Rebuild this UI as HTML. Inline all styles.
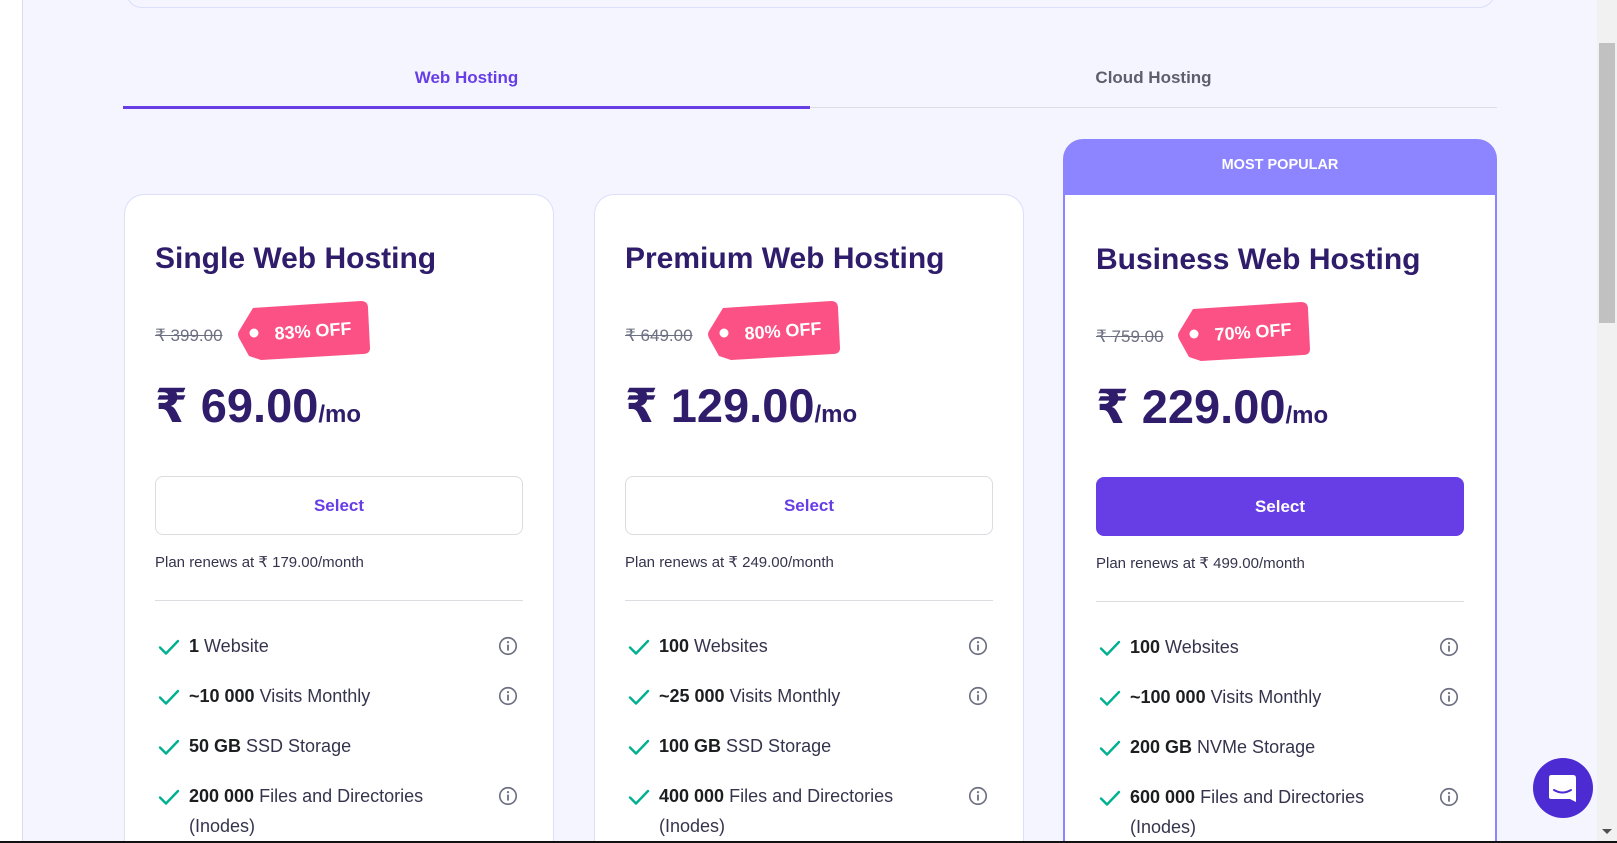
<!DOCTYPE html>
<html><head><meta charset="utf-8"><style>
*{margin:0;padding:0;box-sizing:border-box}
html,body{width:1617px;height:843px;overflow:hidden}
body{background:#f4f5ff;font-family:"Liberation Sans","DejaVu Sans",sans-serif;position:relative;color:#2f1c6a}
.abs{position:absolute}
.leftwhite{left:0;top:0;width:23px;height:843px;background:#fff;border-right:1px solid #dadce6}
.topbox{left:126px;top:-30px;width:1369px;height:38px;border:1px solid #dadffa;border-radius:16px;background:#f4f5ff}
.tab{top:68px;font-size:17px;font-weight:bold;text-align:center;width:687px}
.card{top:194px;width:430px;height:649px;background:#fff;border:1px solid #dadffa;border-bottom:none;border-radius:20px 20px 0 0}
.card3{left:1063px;top:195px;width:434px;height:648px;background:#fff;border:2px solid #8c85ff;border-top:none;border-bottom:none}
.hdr{left:1063px;top:139px;width:434px;height:57px;background:#8c85ff;border-radius:20px 20px 0 0;color:#fff;font-size:14.5px;font-weight:bold;text-align:center;line-height:52px}
.title{font-size:30px;font-weight:bold;color:#2f1c6a;white-space:nowrap}
.old{font-size:17px;color:#6d7081;text-decoration:line-through}
.price{font-size:47px;font-weight:bold;white-space:nowrap}
.price small{font-size:24px;font-weight:bold}
.btn{width:368px;height:59px;border:1px solid #dadce0;border-radius:8px;font-size:17px;font-weight:bold;color:#673de6;text-align:center;line-height:57px;background:#fff}
.btn.p{background:#673de6;color:#fff;border-color:#673de6}
.renew{font-size:15px;color:#36344d}
.div{width:368px;height:1px;background:#dadce0}
.feat{font-size:18px;color:#36344d;white-space:nowrap}
.feat b{color:#1d1e20}
.chk{position:absolute;left:-32px;top:-1px}
.info{position:absolute}
</style></head><body>
<div class="abs leftwhite"></div>
<div class="abs topbox"></div>
<div class="abs tab" style="left:123px;color:#673de6">Web Hosting</div>
<div class="abs tab" style="left:810px;color:#5e5e6c">Cloud Hosting</div>
<div class="abs" style="left:123px;top:107px;width:1374px;height:1px;background:#dadce6"></div>
<div class="abs" style="left:123px;top:106px;width:687px;height:3px;background:#673de6"></div>

<div class="abs card" style="left:124px"></div>
<div class="abs card" style="left:594px"></div>
<div class="abs hdr">MOST POPULAR</div>
<div class="abs card3"></div>

<div class="abs title" style="left:155px;top:242px">Single Web Hosting</div>
<div class="abs old" style="left:155px;top:326px">₹ 399.00</div>
<svg class="abs" style="left:237px;top:298px" viewBox="0 0 134 62" width="134" height="62"><path d="M12 58 L2 40 Q0 36 2 33 L16 10 L124 3 Q131 3 131 10 L133 50 Q133 56 126 56 L24 62 Z" fill="#fc5185"/><circle cx="17" cy="35" r="4.5" fill="#fff"/><text x="76" y="39" font-size="18" font-weight="bold" fill="#fff" text-anchor="middle" transform="rotate(-4 76 33)" font-family="Liberation Sans,sans-serif">83% OFF</text></svg>
<div class="abs price" style="left:155px;top:378px">₹ 69.00<small>/mo</small></div>
<div class="abs btn" style="left:155px;top:476px">Select</div>
<div class="abs renew" style="left:155px;top:553px">Plan renews at ₹ 179.00/month</div>
<div class="abs div" style="left:155px;top:600px"></div>

<div class="abs title" style="left:625px;top:242px">Premium Web Hosting</div>
<div class="abs old" style="left:625px;top:326px">₹ 649.00</div>
<svg class="abs" style="left:707px;top:298px" viewBox="0 0 134 62" width="134" height="62"><path d="M12 58 L2 40 Q0 36 2 33 L16 10 L124 3 Q131 3 131 10 L133 50 Q133 56 126 56 L24 62 Z" fill="#fc5185"/><circle cx="17" cy="35" r="4.5" fill="#fff"/><text x="76" y="39" font-size="18" font-weight="bold" fill="#fff" text-anchor="middle" transform="rotate(-4 76 33)" font-family="Liberation Sans,sans-serif">80% OFF</text></svg>
<div class="abs price" style="left:625px;top:378px">₹ 129.00<small>/mo</small></div>
<div class="abs btn" style="left:625px;top:476px">Select</div>
<div class="abs renew" style="left:625px;top:553px">Plan renews at ₹ 249.00/month</div>
<div class="abs div" style="left:625px;top:600px"></div>

<div class="abs title" style="left:1096px;top:243px">Business Web Hosting</div>
<div class="abs old" style="left:1096px;top:327px">₹ 759.00</div>
<svg class="abs" style="left:1177px;top:299px" viewBox="0 0 134 62" width="134" height="62"><path d="M12 58 L2 40 Q0 36 2 33 L16 10 L124 3 Q131 3 131 10 L133 50 Q133 56 126 56 L24 62 Z" fill="#fc5185"/><circle cx="17" cy="35" r="4.5" fill="#fff"/><text x="76" y="39" font-size="18" font-weight="bold" fill="#fff" text-anchor="middle" transform="rotate(-4 76 33)" font-family="Liberation Sans,sans-serif">70% OFF</text></svg>
<div class="abs price" style="left:1096px;top:379px">₹ 229.00<small>/mo</small></div>
<div class="abs btn p" style="left:1096px;top:477px">Select</div>
<div class="abs renew" style="left:1096px;top:554px">Plan renews at ₹ 499.00/month</div>
<div class="abs div" style="left:1096px;top:601px"></div>

<svg width="0" height="0" style="position:absolute"><defs>
<symbol id="ck" viewBox="0 0 24 24"><path d="M3 12.5 L9 18.5 L21 6" fill="none" stroke="#00b090" stroke-width="2.4" stroke-linecap="round" stroke-linejoin="round"/></symbol>
<symbol id="in" viewBox="0 0 24 24"><circle cx="12" cy="12" r="9" fill="none" stroke="#6d7081" stroke-width="1.8"/><circle cx="12" cy="7.8" r="1.2" fill="#6d7081"/><path d="M12 10.5v6.5" stroke="#6d7081" stroke-width="2"/></symbol>
</defs></svg>

<div class="abs" style="left:189px;top:636px">
 <div class="feat abs" style="top:0"><svg class="chk" width="24" height="24"><use href="#ck"/></svg><b>1</b> Website</div>
 <div class="feat abs" style="top:50px"><svg class="chk" width="24" height="24"><use href="#ck"/></svg><b>~10 000</b> Visits Monthly</div>
 <div class="feat abs" style="top:100px"><svg class="chk" width="24" height="24"><use href="#ck"/></svg><b>50 GB</b> SSD Storage</div>
 <div class="feat abs" style="top:150px"><svg class="chk" width="24" height="24"><use href="#ck"/></svg><b>200 000</b> Files and Directories<br><span style="line-height:38px">(Inodes)</span></div>
 <svg class="info" style="left:308px;top:-1px" width="22" height="22"><use href="#in"/></svg>
 <svg class="info" style="left:308px;top:49px" width="22" height="22"><use href="#in"/></svg>
 <svg class="info" style="left:308px;top:149px" width="22" height="22"><use href="#in"/></svg>
</div>
<div class="abs" style="left:659px;top:636px">
 <div class="feat abs" style="top:0"><svg class="chk" width="24" height="24"><use href="#ck"/></svg><b>100</b> Websites</div>
 <div class="feat abs" style="top:50px"><svg class="chk" width="24" height="24"><use href="#ck"/></svg><b>~25 000</b> Visits Monthly</div>
 <div class="feat abs" style="top:100px"><svg class="chk" width="24" height="24"><use href="#ck"/></svg><b>100 GB</b> SSD Storage</div>
 <div class="feat abs" style="top:150px"><svg class="chk" width="24" height="24"><use href="#ck"/></svg><b>400 000</b> Files and Directories<br><span style="line-height:38px">(Inodes)</span></div>
 <svg class="info" style="left:308px;top:-1px" width="22" height="22"><use href="#in"/></svg>
 <svg class="info" style="left:308px;top:49px" width="22" height="22"><use href="#in"/></svg>
 <svg class="info" style="left:308px;top:149px" width="22" height="22"><use href="#in"/></svg>
</div>
<div class="abs" style="left:1130px;top:637px">
 <div class="feat abs" style="top:0"><svg class="chk" width="24" height="24"><use href="#ck"/></svg><b>100</b> Websites</div>
 <div class="feat abs" style="top:50px"><svg class="chk" width="24" height="24"><use href="#ck"/></svg><b>~100 000</b> Visits Monthly</div>
 <div class="feat abs" style="top:100px"><svg class="chk" width="24" height="24"><use href="#ck"/></svg><b>200 GB</b> NVMe Storage</div>
 <div class="feat abs" style="top:150px"><svg class="chk" width="24" height="24"><use href="#ck"/></svg><b>600 000</b> Files and Directories<br><span style="line-height:38px">(Inodes)</span></div>
 <svg class="info" style="left:308px;top:-1px" width="22" height="22"><use href="#in"/></svg>
 <svg class="info" style="left:308px;top:49px" width="22" height="22"><use href="#in"/></svg>
 <svg class="info" style="left:308px;top:149px" width="22" height="22"><use href="#in"/></svg>
</div>

<svg class="abs" style="left:1533px;top:758px" width="60" height="60" viewBox="0 0 60 60"><circle cx="30" cy="30" r="30" fill="#4c2bd3"/><path d="M18 17 Q16 17 16 20 V39 Q16 41 18 41 H37 L43 44 V20 Q43 17 40 17 Z" fill="#fff"/><path d="M21 32 Q29.5 37 38 32" fill="none" stroke="#4c2bd3" stroke-width="2" stroke-linecap="round"/></svg>

<div class="abs" style="left:1597px;top:0;width:20px;height:843px;background:#f1f1f1"></div>
<div class="abs" style="left:1599px;top:43px;width:16px;height:280px;background:#c1c1c1"></div>
<div class="abs" style="left:1602px;top:829px;width:0;height:0;border-left:5px solid transparent;border-right:5px solid transparent;border-top:5px solid #505050"></div>
<div class="abs" style="left:0;top:841px;width:1617px;height:2px;background:#111"></div>
</body></html>
